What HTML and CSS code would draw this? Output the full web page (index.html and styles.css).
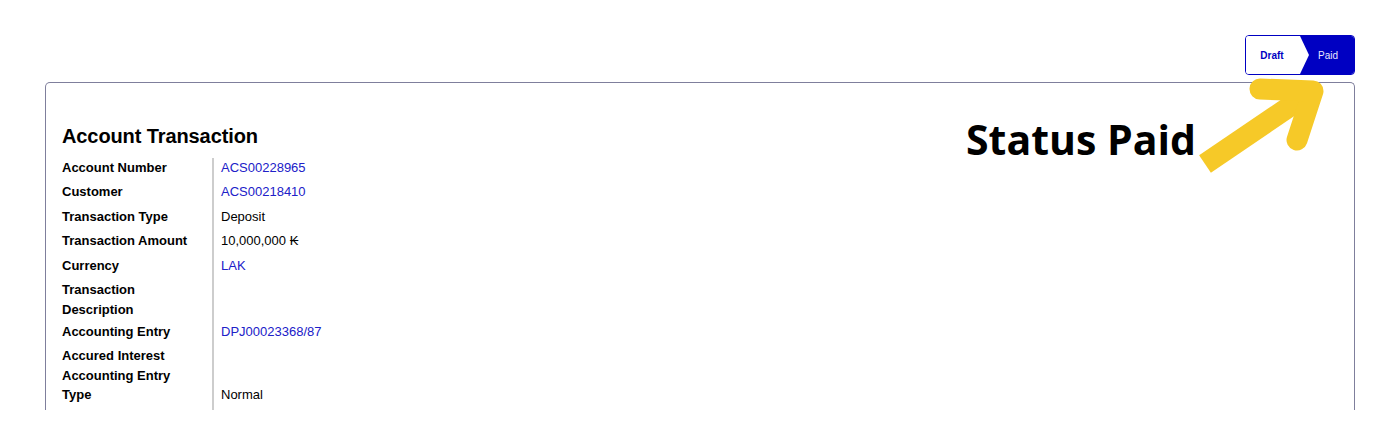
FILE: index.html
```html
<!DOCTYPE html>
<html>
<head>
<meta charset="utf-8">
<link rel="stylesheet" href="styles.css">
</head>
<body>
<div class="viewport">
  <div class="header">
    <div class="statusbar">
      <div class="stage draft">Draft</div>
      <div class="stage paid">Paid</div>
    </div>
  </div>
  <div class="card">
    <h1 class="title">Account Transaction</h1>
    <div class="fields">
      <div class="label">Account Number</div><div class="value link">ACS00228965</div>
      <div class="label">Customer</div><div class="value link">ACS00218410</div>
      <div class="label">Transaction Type</div><div class="value">Deposit</div>
      <div class="label">Transaction Amount</div><div class="value">10,000,000 ₭</div>
      <div class="label">Currency</div><div class="value link">LAK</div>
      <div class="label">Transaction Description</div><div class="value"></div>
      <div class="label">Accounting Entry</div><div class="value link">DPJ00023368/87</div>
      <div class="label">Accured Interest Accounting Entry Type</div><div class="value bottom">Normal</div>
    </div>
  </div>
</div>
<div class="annotation">Status Paid</div>
<svg class="arrow" width="1383" height="429" viewBox="0 0 1383 429">
  <path d="M1205 164 L1308 94" stroke="#F6C928" stroke-width="21" fill="none" stroke-linecap="butt"/>
  <path d="M1260 89 L1313 91 L1297 140" stroke="#F6C928" stroke-width="21" fill="none" stroke-linecap="round" stroke-linejoin="round"/>
</svg>
</body>
</html>
```
FILE: styles.css
```css
html, body {
  margin: 0;
  padding: 0;
  background: #ffffff;
}
body {
  width: 1383px;
  height: 429px;
  overflow: hidden;
  position: relative;
  font-family: "Liberation Sans", Arial, sans-serif;
  color: #111111;
}
.viewport {
  height: 410px;
  overflow: hidden;
  display: flex;
  flex-direction: column;
  padding: 35px 28px 0 45px;
  box-sizing: border-box;
}
.header {
  display: flex;
  justify-content: flex-end;
  margin-bottom: 7px;
}
.statusbar {
  display: flex;
  height: 40px;
  width: 110px;
  box-sizing: border-box;
  border: 1px solid #0000c2;
  border-radius: 4px;
  overflow: hidden;
}
.stage {
  flex: 1;
  display: flex;
  align-items: center;
  justify-content: center;
  font-size: 10px;
  position: relative;
}
.draft {
  background: #ffffff;
  color: #0000c2;
  font-weight: 700;
  padding-right: 2px;
}
.draft::after {
  content: "";
  position: absolute;
  right: -9px;
  top: 0;
  width: 0;
  height: 0;
  border-top: 19px solid transparent;
  border-bottom: 19px solid transparent;
  border-left: 9px solid #ffffff;
  z-index: 1;
}
.paid {
  background: #0000c2;
  color: #e8e8ff;
  padding-left: 2px;
}
.card {
  flex: 1;
  display: flex;
  flex-direction: column;
  border: 1px solid #7f7f9c;
  border-bottom: none;
  border-radius: 5px 5px 0 0;
  padding: 42px 16px 0;
}
.title {
  margin: 0 0 7px;
  font-size: 20px;
  line-height: 23px;
  font-weight: 700;
  color: #000000;
  letter-spacing: -0.1px;
}
.fields {
  flex: 1;
  display: grid;
  grid-template-columns: 150px 1fr;
  align-content: start;
  background: linear-gradient(#cdcdcd, #cdcdcd) no-repeat 150px 3px / 2px 100%;
}
.label, .value {
  font-size: 13px;
  line-height: 19.5px;
  padding-top: 2.5px;
  min-height: 24.5px;
  box-sizing: border-box;
}
.label {
  font-weight: 700;
  color: #000000;
  padding-right: 10px;
}
.value {
  padding-left: 9px;
  color: #000000;
}
.value.bottom {
  display: flex;
  align-items: flex-end;
}
.link {
  color: #2020c8;
}
.annotation {
  position: absolute;
  left: 966px;
  top: 119px;
  font-family: "Open Sans", sans-serif;
  font-weight: 700;
  font-size: 41px;
  line-height: 41px;
  color: #000000;
  white-space: nowrap;
}
.arrow {
  position: absolute;
  left: 0;
  top: 0;
  pointer-events: none;
}
```
